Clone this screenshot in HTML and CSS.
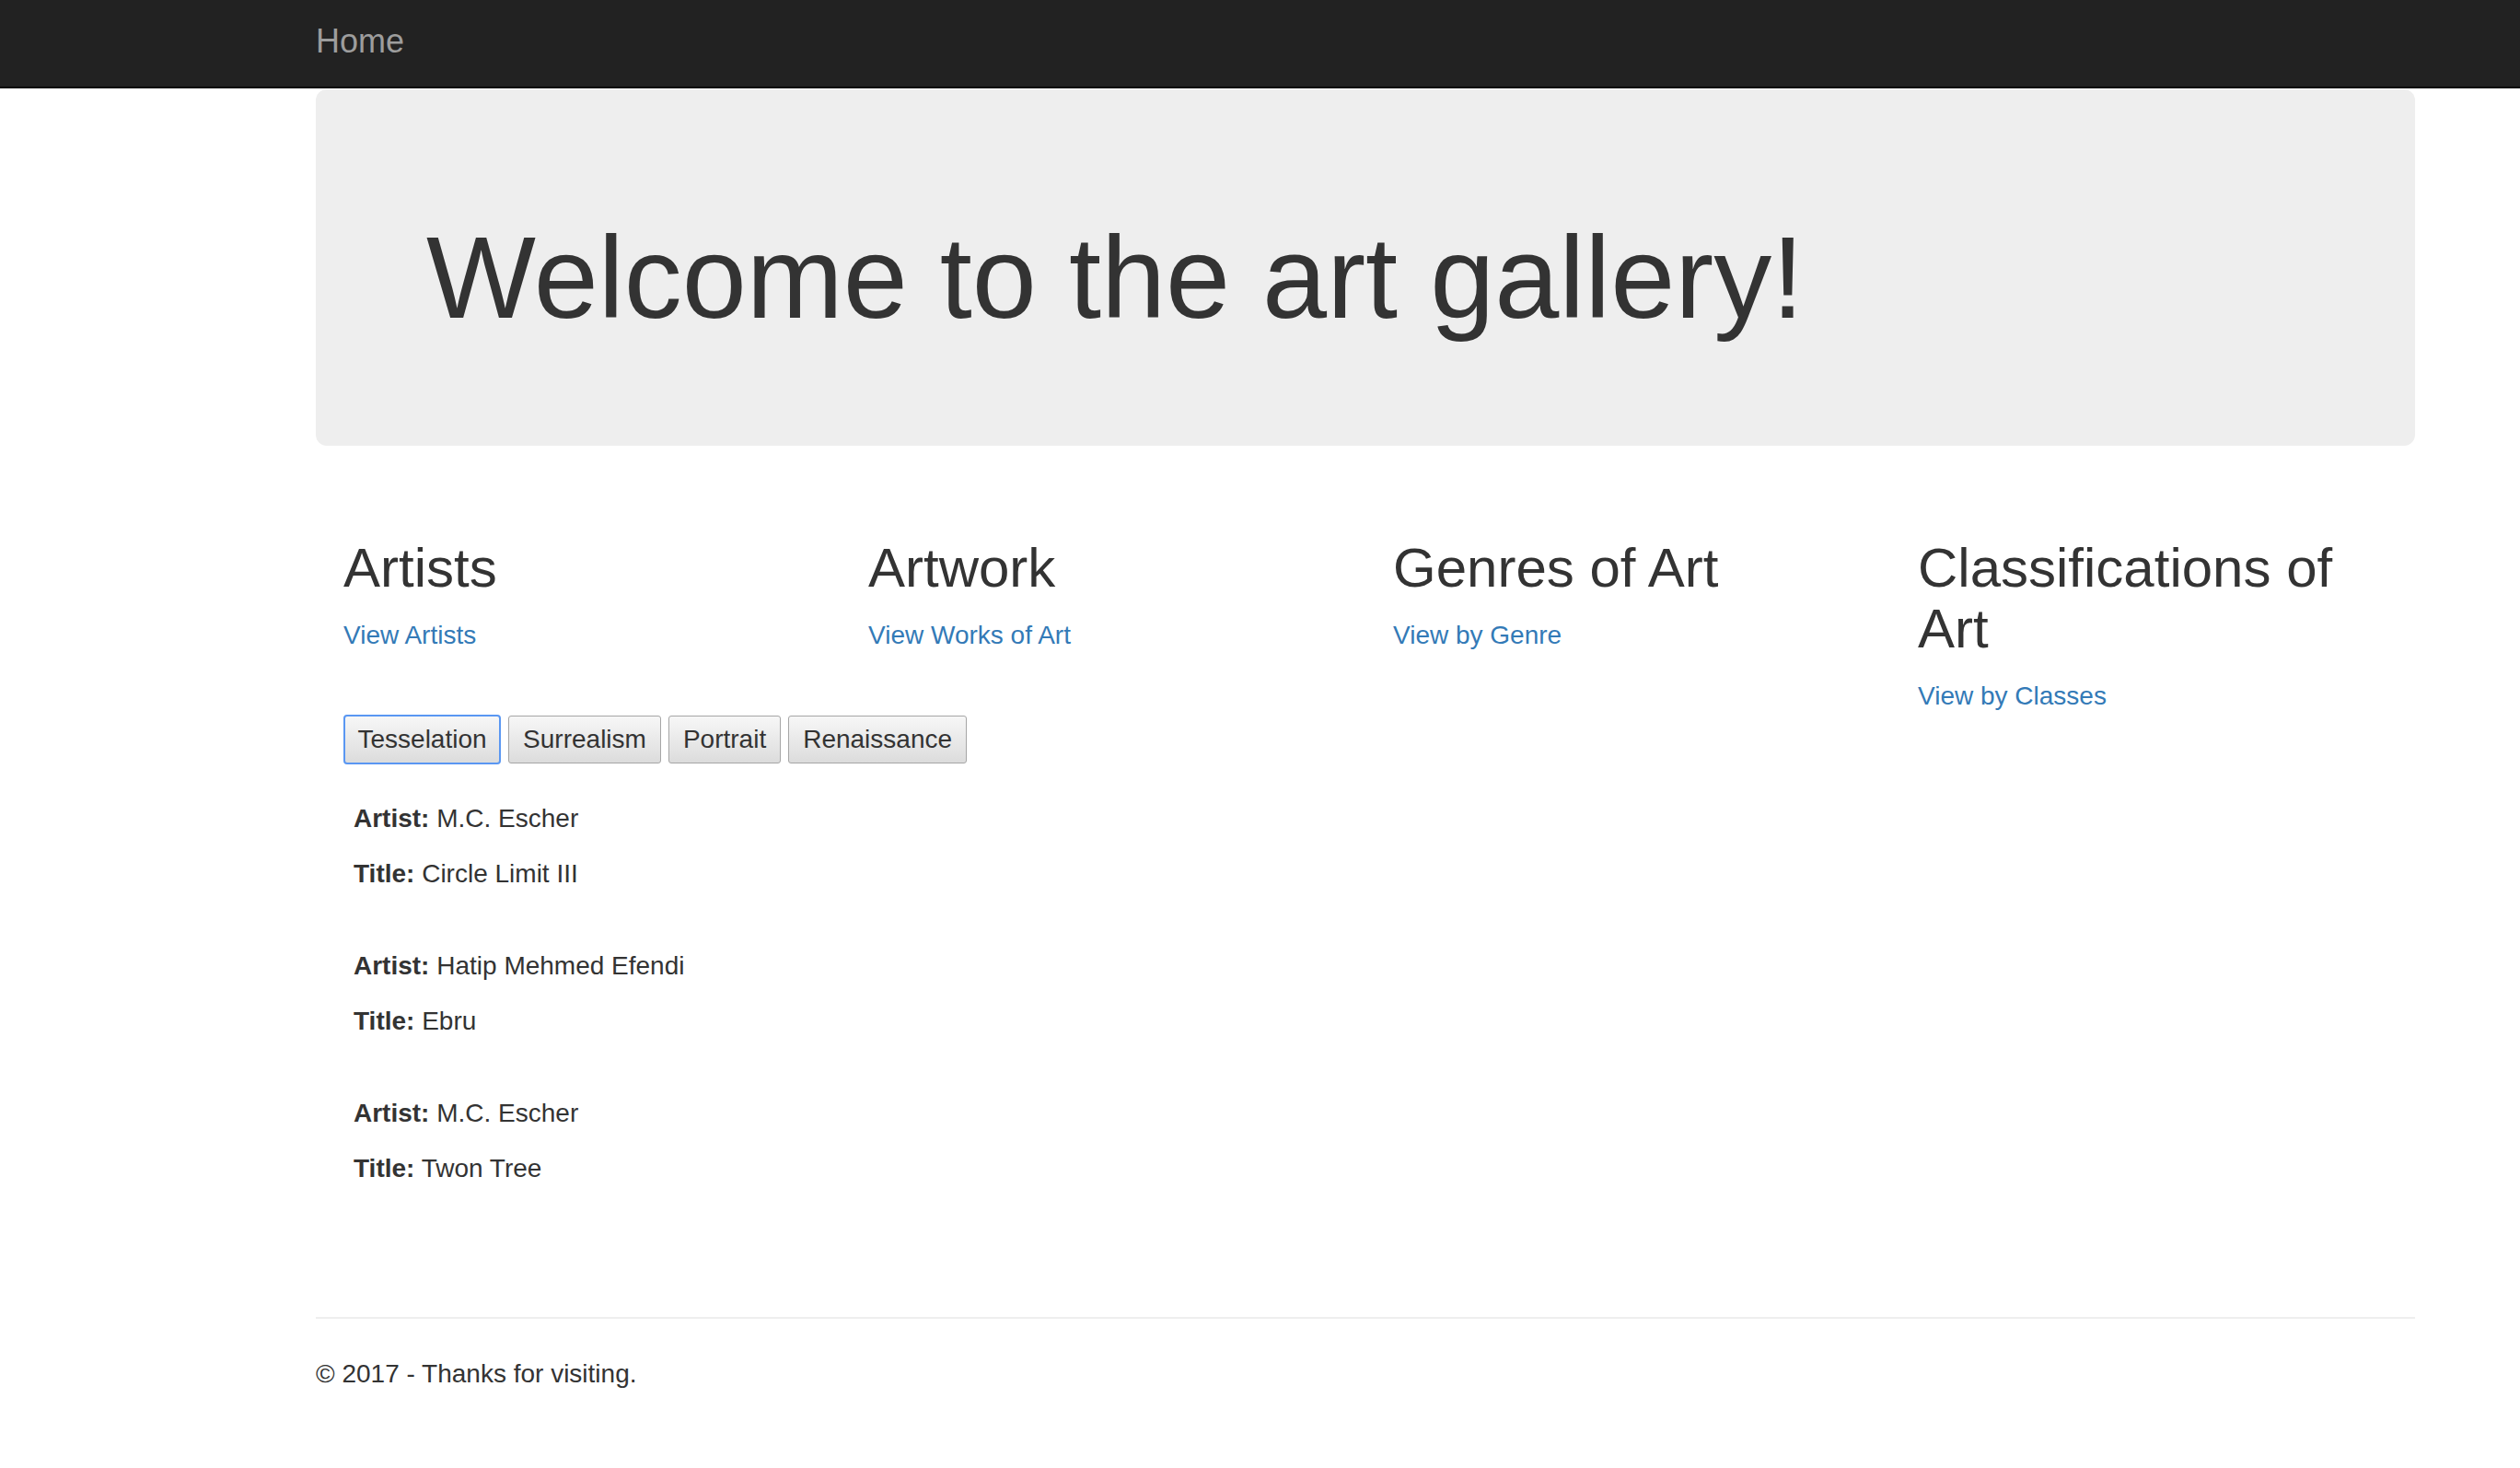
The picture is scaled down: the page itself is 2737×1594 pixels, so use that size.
FILE: index.html
```html
<!DOCTYPE html>
<html lang="en">
<head>
<meta charset="utf-8">
<title>Home Page - Art Gallery</title>
<link rel="stylesheet" href="styles.css">
</head>
<body>
<header class="navbar">
  <div class="container">
    <a class="brand" href="#">Home</a>
  </div>
</header>
<main class="container body-content">
  <section class="jumbotron">
    <h1>Welcome to the art gallery!</h1>
  </section>
  <div class="row">
    <div class="col">
      <h2>Artists</h2>
      <p><a href="#">View Artists</a></p>
    </div>
    <div class="col">
      <h2>Artwork</h2>
      <p><a href="#">View Works of Art</a></p>
    </div>
    <div class="col">
      <h2>Genres of Art</h2>
      <p><a href="#">View by Genre</a></p>
    </div>
    <div class="col col-tall">
      <h2>Classifications of Art</h2>
      <p><a href="#">View by Classes</a></p>
    </div>
    <div class="gallery">
      <div class="filters">
        <button class="btn focused" type="button">Tesselation</button>
        <button class="btn" type="button">Surrealism</button>
        <button class="btn" type="button">Portrait</button>
        <button class="btn" type="button">Renaissance</button>
      </div>
      <div class="works">
        <div class="work">
          <p><strong>Artist:</strong> M.C. Escher</p>
          <p><strong>Title:</strong> Circle Limit III</p>
        </div>
        <div class="work">
          <p><strong>Artist:</strong> Hatip Mehmed Efendi</p>
          <p><strong>Title:</strong> Ebru</p>
        </div>
        <div class="work">
          <p><strong>Artist:</strong> M.C. Escher</p>
          <p><strong>Title:</strong> Twon Tree</p>
        </div>
      </div>
    </div>
  </div>
  <hr class="divider">
  <footer class="footer">
    <p>&copy; 2017 - Thanks for visiting.</p>
  </footer>
</main>
</body>
</html>
```

FILE: styles.css
```css
* {
  box-sizing: border-box;
}

html, body {
  margin: 0;
  padding: 0;
  background: #fff;
}

body {
  font-family: "Liberation Sans", Arial, Helvetica, sans-serif;
  font-size: 28px;
  line-height: 40px;
  color: #333;
}

a {
  color: #337ab7;
  text-decoration: none;
}

.container {
  width: 2340px;
  margin-left: 313px;
  padding: 0 30px;
}

/* Navbar */
.navbar {
  background: #222;
  height: 96px;
  border-bottom: 2px solid #080808;
}

.brand {
  display: inline-block;
  padding-top: 25px;
  font-size: 36px;
  line-height: 40px;
  color: #9d9d9d;
}

/* Main */
.body-content {
  margin-top: 1px;
}

.jumbotron {
  background: #eee;
  border-radius: 12px;
  padding: 96px 120px 92px;
  margin-bottom: 60px;
}

.jumbotron h1 {
  margin: 40px 0 20px;
  font-size: 126px;
  line-height: 138.6px;
  font-weight: 500;
  color: #333;
}

.row {
  display: grid;
  grid-template-columns: repeat(4, 1fr);
  grid-template-rows: auto auto;
  align-items: start;
}

.col {
  padding: 0 30px;
}

.col-tall {
  grid-column: 4;
  grid-row: 1 / span 2;
}

.col h2 {
  margin: 40px 0 20px;
  font-size: 60px;
  line-height: 66px;
  font-weight: 500;
}

.col p {
  margin: 0 0 20px;
}

/* Gallery */
.gallery {
  grid-column: 1 / 4;
  grid-row: 2;
  padding: 0 30px;
}

.filters {
  display: flex;
  gap: 8px;
  margin-top: 47px;
}

.btn {
  font-family: inherit;
  font-size: 28px;
  line-height: 40px;
  color: #333;
  height: 52px;
  padding: 5px 15px;
  margin: 0;
  border: 1px solid #a6a6a6;
  border-radius: 3px;
  background: linear-gradient(to bottom, #f7f7f7 0%, #dcdcdc 100%);
}

.btn.focused {
  padding: 5px 13.5px;
  border: 2px solid #5a97f2;
  border-radius: 4px;
  height: 54px;
  margin-top: -1px;
}

.works {
  display: flex;
  flex-direction: column;
  gap: 60px;
  margin-top: 39px;
  padding-left: 11px;
}

.work {
  display: flex;
  flex-direction: column;
  gap: 20px;
}

.work p {
  margin: 0;
}

.work strong {
  font-weight: 700;
}

/* Footer */
.divider {
  margin: 141px 0 40px;
  border: 0;
  border-top: 2px solid #eee;
  height: 0;
}

.footer p {
  margin: 0 0 20px;
}
```
